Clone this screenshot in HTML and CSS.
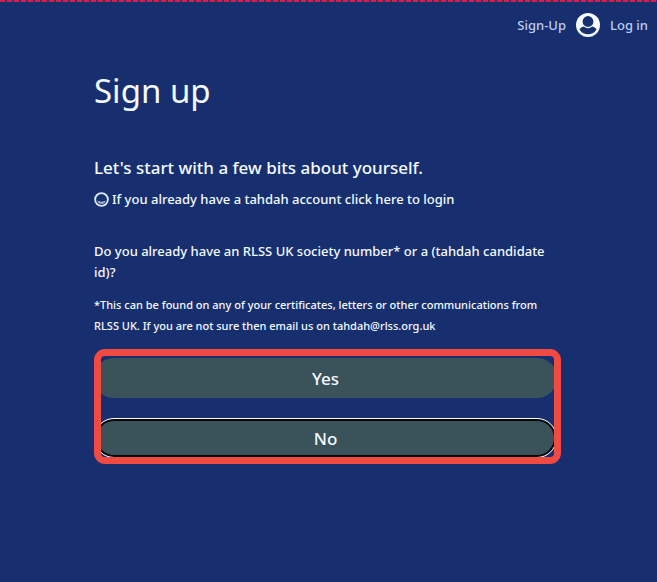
FILE: index.html
```html
<!DOCTYPE html>
<html lang="en">
<head>
  <meta charset="UTF-8" />
  <meta name="viewport" content="width=device-width, initial-scale=1" />
  <title>Sign up</title>
  <link rel="stylesheet" href="styles.css">
</head>
<body>
  <header class="topbar">
    <a class="nav-link" href="#">Sign-Up</a>
    <svg class="user-icon" viewBox="0 0 24 24" aria-hidden="true">
      <circle cx="12" cy="12" r="12" fill="#f4faff"/>
      <path d="M3.500 16.500c1-1.500 2.400-2.500 4.300-2.900a6.900 6.900 0 0 0 8.400 0c1.900.4 3.300 1.400 4.300 2.900a9.900 9.900 0 0 1-17 0z" fill="#182f6f"/>
      <circle cx="12" cy="8.500" r="5.400" fill="#182f6f"/>
    </svg>
    <a class="nav-link" href="#">Log in</a>
  </header>
  <main class="signup">
    <h1>Sign up</h1>
    <h2>Let's start with a few bits about yourself.</h2>
    <a class="login-link" href="#">
      <svg class="login-icon" viewBox="0 0 16 16" aria-hidden="true">
        <circle cx="8" cy="8" r="6.800" fill="none" stroke="#dce8fa" stroke-width="2"/>
        <path d="M4 10a4.800 4.800 0 0 0 8 0q-4 2-8 0z" fill="#aebfe8" stroke="#aebfe8" stroke-width="1"/>
      </svg>
      <span>If you already have a tahdah account click here to login</span>
    </a>
    <p class="question">Do you already have an RLSS UK society number* or a (tahdah candidate id)?</p>
    <p class="note">*This can be found on any of your certificates, letters or other communications from RLSS UK. If you are not sure then email us on tahdah@rlss.org.uk</p>
    <div class="choices">
      <button class="choice" type="button">Yes</button>
      <button class="choice focused" type="button">No</button>
    </div>
  </main>
</body>
</html>
```

FILE: styles.css
```css
* {
  box-sizing: border-box;
}
body {
  margin: 0;
  min-height: 100vh;
  background: #182f6f;
  color: #f4faff;
  font-family: "Noto Sans", "Open Sans", sans-serif;
  font-weight: 500;
}
body::before {
  content: "";
  display: block;
  height: 2px;
  background: repeating-linear-gradient(90deg, #cf2449 0 5px, #4e2863 5px 7px);
}
a {
  color: inherit;
  text-decoration: none;
}
.topbar {
  display: flex;
  justify-content: flex-end;
  align-items: center;
  gap: 10px;
  padding: 10px 9px 0 0;
  font-size: 13px;
  line-height: 26px;
}
.nav-link {
  color: #bdcbed;
}
.user-icon {
  width: 24px;
  height: 24px;
}
.signup {
  padding: 0 96px 0 94px;
}
h1 {
  margin: 31px 0 0;
  font-size: 33px;
  line-height: 44px;
  font-weight: 400;
}
h2 {
  margin: 43px 0 0;
  font-size: 17px;
  line-height: 24px;
  font-weight: 500;
}
.login-link {
  display: flex;
  align-items: center;
  gap: 3px;
  margin-top: 9px;
  font-size: 13px;
  line-height: 21px;
  white-space: nowrap;
}
.login-icon {
  width: 15px;
  height: 15px;
}
.question {
  margin: 31px 16px 0 0;
  font-size: 13px;
  line-height: 21px;
}
.note {
  margin: 11px 16px 0 0;
  font-size: 11px;
  line-height: 21px;
}
.choices {
  position: relative;
  display: flex;
  flex-direction: column;
  gap: 20px;
  margin-top: 13px;
  padding: 9px 4px 6px 0;
}
/* highlight frame, drawn over the button edges */
.choices::after {
  content: "";
  position: absolute;
  inset: 0;
  border: 7px solid #f04a43;
  border-radius: 11px;
  pointer-events: none;
}
.choice {
  height: 40px;
  padding: 0;
  border: none;
  border-radius: 20px;
  background: #3a525a;
  color: #f4faff;
  font-family: inherit;
  font-size: 17px;
  font-weight: 500;
  cursor: pointer;
}
.focused {
  border: 1px solid #fff;
  box-shadow: inset 0 0 0 2px #050709;
}
```
